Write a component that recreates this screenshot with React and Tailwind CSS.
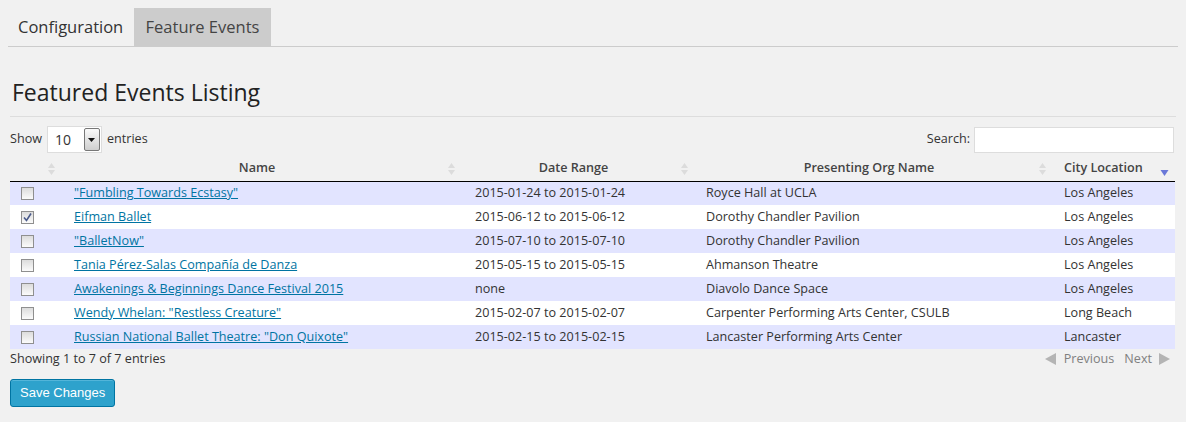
import React from 'react';

const rows = [
  { name: '"Fumbling Towards Ecstasy"', date: '2015-01-24 to 2015-01-24', org: 'Royce Hall at UCLA', city: 'Los Angeles', checked: false },
  { name: 'Eifman Ballet', date: '2015-06-12 to 2015-06-12', org: 'Dorothy Chandler Pavilion', city: 'Los Angeles', checked: true },
  { name: '"BalletNow"', date: '2015-07-10 to 2015-07-10', org: 'Dorothy Chandler Pavilion', city: 'Los Angeles', checked: false },
  { name: 'Tania Pérez-Salas Compañía de Danza', date: '2015-05-15 to 2015-05-15', org: 'Ahmanson Theatre', city: 'Los Angeles', checked: false },
  { name: 'Awakenings & Beginnings Dance Festival 2015', date: 'none', org: 'Diavolo Dance Space', city: 'Los Angeles', checked: false },
  { name: 'Wendy Whelan: "Restless Creature"', date: '2015-02-07 to 2015-02-07', org: 'Carpenter Performing Arts Center, CSULB', city: 'Long Beach', checked: false },
  { name: 'Russian National Ballet Theatre: "Don Quixote"', date: '2015-02-15 to 2015-02-15', org: 'Lancaster Performing Arts Center', city: 'Lancaster', checked: false },
];

function SortBoth() {
  return (
    <svg width="9" height="16" viewBox="0 0 9 16" className="absolute right-[6px] top-[4px]">
      <path d="M4.5 2 L8 7 L1 7 Z" fill="#dcdcdc" />
      <path d="M4.5 14 L8 9 L1 9 Z" fill="#dcdcdc" />
    </svg>
  );
}

function SortDesc() {
  return (
    <svg width="9" height="16" viewBox="0 0 9 16" className="absolute right-[6px] top-[5px]">
      <path d="M4.5 14 L8.5 8 L0.5 8 Z" fill="#6a78d8" />
    </svg>
  );
}

function Checkbox({ checked }) {
  return (
    <span className="inline-block w-[13px] h-[13px] border border-[#8f8f8f] bg-gradient-to-b from-[#dcdcdc] to-[#fbfbfb] relative align-middle">
      {checked && (
        <svg width="11" height="11" viewBox="0 0 11 11" className="absolute left-0 top-0">
          <path d="M2 5.5 L4.5 8.5 L9 1.5" stroke="#4a5a8a" strokeWidth="1.6" fill="none" />
        </svg>
      )}
    </span>
  );
}

export default function App() {
  return (
    <div className="min-h-[422px] bg-[#f1f1f1] text-[#333] font-['Open_Sans',sans-serif]">
      {/* tabs */}
      <div className="pt-[8px] mx-[8px] flex border-b border-[#ccc]">
        <div className="w-[126px] pl-[10px] h-[38px] flex items-center text-[16.5px] text-[#333]">Configuration</div>
        <div className="w-[137px] h-[38px] flex items-center justify-center text-[16.5px] text-[#444] bg-[#ccc]">Feature Events</div>
      </div>

      <h2 className="ml-[12px] mt-[28px] text-[23px] leading-[34px] text-[#222] font-normal">Featured Events Listing</h2>
      <div className="ml-[10px] mr-[10px] mt-[7px] border-b border-[#ddd]"></div>

      <div className="mx-[10px] mt-[9px] flex items-center justify-between text-[12.6px] text-[#333]">
        <div className="flex items-center gap-[4px]">
          <span>Show</span>
          <div className="ml-[1px] w-[55px] h-[27px] bg-white border border-[#ddd] flex items-center justify-between pl-[7px] pr-[1px]">
            <span className="text-[14px]">10</span>
            <span className="w-[16px] h-[23px] border border-[#777] rounded-[2px] bg-gradient-to-b from-[#fafafa] to-[#cfcfcf] flex items-center justify-center">
              <svg width="7" height="4" viewBox="0 0 7 4"><path d="M0 0 L7 0 L3.5 4 Z" fill="#111" /></svg>
            </span>
          </div>
          <span className="ml-[1px]">entries</span>
        </div>
        <div className="flex items-center gap-[4px] mr-[2px]">
          <span>Search:</span>
          <div className="w-[200px] h-[26px] bg-white border border-[#ddd]"></div>
        </div>
      </div>

      <table className="mx-[10px] mt-[4px] w-[1165px] table-fixed border-collapse text-[12.6px]">
        <colgroup>
          <col className="w-[52px]" />
          <col className="w-[400px]" />
          <col className="w-[233px]" />
          <col className="w-[358px]" />
          <col className="w-[122px]" />
        </colgroup>
        <thead>
          <tr className="border-b border-black">
            <th className="relative h-[24px]"><SortBoth /></th>
            <th className="relative font-semibold text-[#444] text-center pr-[10px]">Name<SortBoth /></th>
            <th className="relative font-semibold text-[#444] text-center pr-[10px]">Date Range<SortBoth /></th>
            <th className="relative font-semibold text-[#444] text-center pr-[10px]">Presenting Org Name<SortBoth /></th>
            <th className="relative font-semibold text-[#444] text-left pl-[11px]">City Location<SortDesc /></th>
          </tr>
        </thead>
        <tbody>
          {rows.map((r, i) => (
            <tr key={i} className={i % 2 === 0 ? 'bg-[#e2e4ff] h-[24px]' : 'bg-white h-[24px]'}>
              <td className="pl-[11px] leading-none"><Checkbox checked={r.checked} /></td>
              <td className="pl-[12px]"><a href="#" className="text-[#0074a2] underline">{r.name}</a></td>
              <td className="pl-[13px] text-[#333]">{r.date}</td>
              <td className="pl-[11px] text-[#333]">{r.org}</td>
              <td className="pl-[11px] text-[#333]">{r.city}</td>
            </tr>
          ))}
        </tbody>
      </table>

      <div className="mx-[10px] w-[1165px] h-[20px] flex items-center justify-between text-[12.6px] text-[#333]">
        <span>Showing 1 to 7 of 7 entries</span>
        <div className="flex items-center text-[#808080] mr-[5px]">
          <svg width="11" height="12" viewBox="0 0 11 12"><path d="M0 6 L11 0 L11 12 Z" fill="#b4b4b4" /></svg>
          <span className="ml-[8px]">Previous</span>
          <span className="ml-[10px]">Next</span>
          <svg width="11" height="12" viewBox="0 0 11 12" className="ml-[7px]"><path d="M11 6 L0 0 L0 12 Z" fill="#b4b4b4" /></svg>
        </div>
      </div>

      <button className="ml-[10px] mt-[10px] h-[28px] px-[9px] bg-[#2ea2cc] border border-[#0074a2] rounded-[3px] text-white text-[13px] font-['Liberation_Sans',sans-serif] shadow-[inset_0_1px_0_rgba(120,200,230,0.5)]">
        Save Changes
      </button>
    </div>
  );
}
